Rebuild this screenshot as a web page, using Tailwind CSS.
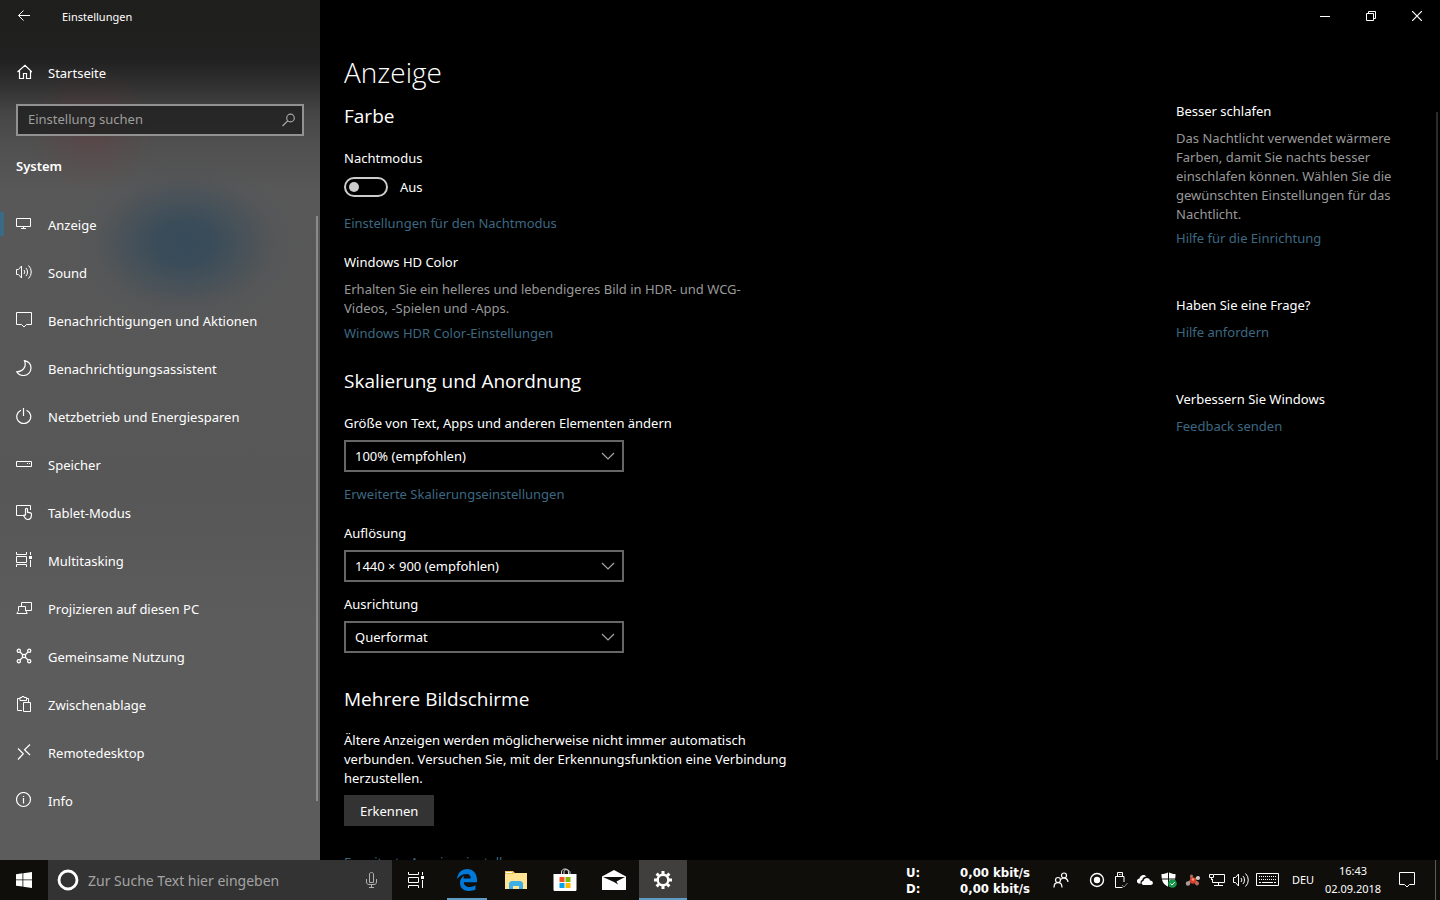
<!DOCTYPE html>
<html lang="de">
<head>
  <meta charset="UTF-8" />
  <meta name="viewport" content="width=device-width, initial-scale=1" />
  <title>Einstellungen</title>
  <script src="https://cdn.jsdelivr.net/npm/@tailwindcss/browser@4"></script>
</head>
<body class="h-screen flex flex-col overflow-hidden bg-black text-white text-[13px] leading-5 font-['Segoe_UI','Noto_Sans',sans-serif]">

  <div class="flex flex-1 min-h-0">

    <!-- Sidebar -->
    <aside class="relative w-80 shrink-0 flex flex-col overflow-hidden bg-[radial-gradient(ellipse_115px_85px_at_185px_243px,#2d475ac8_0%,#2d475ab0_25%,#2d475a60_50%,#2d475a18_75%,transparent_100%),radial-gradient(ellipse_65px_65px_at_92px_130px,#7a2c3040_0%,#7a2c301c_50%,transparent_100%),linear-gradient(#1e1e1c_0px,#212121_60px,#303030_85px,#454545_112px,#505050_145px,#585858_190px,#575757_500px,#5c5c5c_620px,#5c5c5c_100%)]">
      <div class="h-8 flex items-center shrink-0">
        <button class="w-12 h-8 flex items-center justify-center" aria-label="Zurück">
          <svg class="w-4 h-4" viewBox="0 0 16 16" fill="none" stroke="currentColor"><path d="M14 7.500H2.500M7.500 2.500l-5 5 5 5"/></svg>
        </button>
        <h2 class="pl-3.5 pt-px text-[11px]">Einstellungen</h2>
      </div>

      <a href="#" class="mt-4 h-12 px-4 flex items-center gap-4">
        <svg class="w-4 h-4" viewBox="0 0 16 16" fill="none" stroke="currentColor" stroke-width="1.200"><path d="M1.500 8L9 1.200 16 8M3.500 6.500v8h4v-5h3v5h4v-8"/></svg>
        <span class="pt-0.5">Startseite</span>
      </a>

      <div class="relative mt-2 mx-4">
        <input type="text" id="search" aria-label="Einstellung suchen" placeholder="Einstellung suchen" class="block w-full h-8 px-2.5 pr-8 pb-0.5 bg-[#1f1f1f]/80 border-2 border-[#929292] placeholder:text-[#9d9d9d] focus:outline-none" />
        <svg class="absolute right-2 top-2 w-4 h-4 text-[#a6a6a6]" viewBox="0 0 16 16" fill="none" stroke="currentColor" stroke-width="1.200"><circle cx="10.500" cy="6" r="3.800"/><path d="M7.800 8.800L2.500 14"/></svg>
      </div>

      <h3 class="mt-5 px-4 font-semibold">System</h3>

      <nav class="mt-6">
        <a href="#" class="relative h-12 px-4 flex items-center gap-4 before:absolute before:left-0 before:top-3 before:w-1 before:h-6 before:bg-[#3a6a86]">
          <svg class="w-4 h-4" viewBox="0 0 16 16" fill="none" stroke="currentColor"><path d="M.5 2.500h14v8H.5zM5 12.500h5M7.500 11v1"/></svg>
          <span class="pt-0.5">Anzeige</span>
        </a>
        <a href="#" class="h-12 px-4 flex items-center gap-4">
          <svg class="w-4 h-4" viewBox="0 0 16 16" fill="none" stroke="currentColor"><path d="M.5 5.500h2l3-3.500v12l-3-3.500h-2zM8 6a3 3 0 0 1 0 4M10 4a6 6 0 0 1 0 8M12.500 1.500a9 9 0 0 1 0 13"/></svg>
          <span class="pt-0.5">Sound</span>
        </a>
        <a href="#" class="h-12 px-4 flex items-center gap-4">
          <svg class="w-4 h-4" viewBox="0 0 16 16" fill="none" stroke="currentColor"><path d="M.5.5h15v12h-5L8 15l-2.500-2.500h-5z"/></svg>
          <span class="pt-0.5">Benachrichtigungen und Aktionen</span>
        </a>
        <a href="#" class="h-12 px-4 flex items-center gap-4">
          <svg class="w-4 h-4" viewBox="0 0 16 16" fill="none" stroke="currentColor" stroke-width="1.200"><path d="M8.500.7C13 1.700 15 5 15 8c0 4.300-3.300 7.500-7.500 7.500-3 0-5.500-1.500-6.800-3.700C6.500 12 11 7 8.500.7z"/></svg>
          <span class="pt-0.5">Benachrichtigungsassistent</span>
        </a>
        <a href="#" class="h-12 px-4 flex items-center gap-4">
          <svg class="w-4 h-4" viewBox="0 0 16 16" fill="none" stroke="currentColor" stroke-width="1.200"><path d="M5 2.200a7 7 0 1 0 5.500 0M7.500 0v8"/></svg>
          <span class="pt-0.5">Netzbetrieb und Energiesparen</span>
        </a>
        <a href="#" class="h-12 px-4 flex items-center gap-4">
          <svg class="w-4 h-4" viewBox="0 0 16 16" fill="none" stroke="currentColor"><path d="M.5 5.500h15v5H.5zM11 7.500h1M13 7.500h1"/></svg>
          <span class="pt-0.5">Speicher</span>
        </a>
        <a href="#" class="h-12 px-4 flex items-center gap-4">
          <svg class="w-4 h-4" viewBox="0 0 16 16" fill="none" stroke="currentColor"><path d="M7 11.500H.5v-10h14V6"/><path d="M9.500 11V5.200c0-1.300 2-1.300 2 0v3l3 .6c.8.2 1 .7 1 1.500 0 3-.8 5.200-3.500 5.200-2.200 0-3.300-1.500-4.500-4 .8-.8 1.500-.5 2 .3" stroke-width="1.200"/></svg>
          <span class="pt-0.5">Tablet-Modus</span>
        </a>
        <a href="#" class="h-12 px-4 flex items-center gap-4">
          <svg class="w-4 h-4" viewBox="0 0 16 16" fill="none" stroke="currentColor"><path d="M.5 0v2.500h10V0M.5 15v-2.500h10V15M.5 4.500h10v6H.5zM14.500 0v3M14.500 8v7"/><path d="M13 4h3v3h-3z" fill="currentColor" stroke="none"/></svg>
          <span class="pt-0.5">Multitasking</span>
        </a>
        <a href="#" class="h-12 px-4 flex items-center gap-4">
          <svg class="w-4 h-4" viewBox="0 0 16 16" fill="none" stroke="currentColor"><path d="M5.500 6V2.500h10v8H10M2.500 11V6.500h7V11M2 11.500L.8 13.500h10.400L10 11"/></svg>
          <span class="pt-0.5">Projizieren auf diesen PC</span>
        </a>
        <a href="#" class="h-12 px-4 flex items-center gap-4">
          <svg class="w-4 h-4" viewBox="0 0 16 16" fill="none" stroke="currentColor" stroke-width="1.300"><circle cx="2.800" cy="2.800" r="1.600"/><circle cx="13.200" cy="2.800" r="1.600"/><circle cx="2.800" cy="13.200" r="1.600"/><circle cx="13.200" cy="13.200" r="1.600"/><circle cx="8" cy="8" r="1.600"/><path d="M4 4l3 3M12 4L9 7M4 12l3-3M12 12L9 9"/></svg>
          <span class="pt-0.5">Gemeinsame Nutzung</span>
        </a>
        <a href="#" class="h-12 px-4 flex items-center gap-4">
          <svg class="w-4 h-4" viewBox="0 0 16 16" fill="none" stroke="currentColor"><path d="M6 14.500H1.500v-12H4M10 2.500h2.500V6M7.500 6.500h7v9h-7zM4 4.500v-3h2V.5h2v1h2.500v3z"/></svg>
          <span class="pt-0.5">Zwischenablage</span>
        </a>
        <a href="#" class="h-12 px-4 flex items-center gap-4">
          <svg class="w-4 h-4" viewBox="0 0 16 16" fill="none" stroke="currentColor" stroke-width="1.200"><path d="M2 4.500l5.300 5.200L2 15.500M14 .5L8.500 5.700 14 11"/></svg>
          <span class="pt-0.5">Remotedesktop</span>
        </a>
        <a href="#" class="h-12 px-4 flex items-center gap-4">
          <svg class="w-4 h-4" viewBox="0 0 16 16" fill="none" stroke="currentColor" stroke-width="1.200"><circle cx="7.500" cy="7.500" r="7"/><path d="M7.500 6v5.500M7.500 4v1"/></svg>
          <span class="pt-0.5">Info</span>
        </a>
      </nav>

      <div class="absolute right-0.5 top-54 bottom-[59px] w-0.5 bg-[#8b8b8b]"></div>
    </aside>

    <!-- Page -->
    <main class="relative flex-1 min-w-0 flex flex-col">
      <div class="h-8 shrink-0 flex justify-end">
        <button class="w-[46px] flex items-center justify-center" aria-label="Minimieren">
          <svg class="w-2.5 h-2.5" viewBox="0 0 10 10" fill="none" stroke="currentColor"><path d="M0 5.500h10"/></svg>
        </button>
        <button class="w-[46px] flex items-center justify-center" aria-label="Verkleinern">
          <svg class="w-2.5 h-2.5" viewBox="0 0 10 10" fill="none" stroke="currentColor"><path d="M.5 2.500h7v7h-7zM2.500 2V.5h7v7H8"/></svg>
        </button>
        <button class="w-[46px] flex items-center justify-center" aria-label="Schließen">
          <svg class="w-2.5 h-2.5" viewBox="0 0 10 10" fill="none" stroke="currentColor" stroke-width="1.200"><path d="M0 0l10 10M10 0L0 10"/></svg>
        </button>
      </div>

      <h1 class="mt-5 px-6 text-[28px] leading-10 font-light font-['Segoe_UI','Open_Sans',sans-serif]">Anzeige</h1>

      <div class="flex-1 min-h-0 flex justify-between overflow-hidden px-6">
        <div class="w-[460px] pt-2.5">
          <section>
            <h2 class="text-[19px] leading-7 font-['Segoe_UI','Open_Sans',sans-serif]">Farbe</h2>
            <p class="mt-[18px]" id="night-label">Nachtmodus</p>
            <label class="mt-[9px] flex items-center gap-3">
              <input type="checkbox" aria-labelledby="night-label" class="relative appearance-none w-11 h-5 rounded-full border-2 border-[#cccccc] before:absolute before:left-[3px] before:top-[3px] before:w-2.5 before:h-2.5 before:rounded-full before:bg-[#cccccc]" />
              <span>Aus</span>
            </label>
            <a href="#" class="mt-4 block text-[#3d6882]">Einstellungen für den Nachtmodus</a>

            <p class="mt-[19px]">Windows HD Color</p>
            <p class="mt-2 w-[430px] leading-[19px] text-[#999999]">Erhalten Sie ein helleres und lebendigeres Bild in HDR- und WCG-Videos, -Spielen und -Apps.</p>
            <a href="#" class="mt-[5px] block text-[#3d6882]">Windows HDR Color-Einstellungen</a>
          </section>

          <section class="mt-6">
            <h2 class="text-[19px] leading-7 font-['Segoe_UI','Open_Sans',sans-serif]">Skalierung und Anordnung</h2>
            <label for="scale" class="mt-[18px] block">Größe von Text, Apps und anderen Elementen ändern</label>
            <div class="relative mt-[7px] w-70">
              <select name="scale" id="scale" class="block appearance-none w-full h-8 px-[9px] bg-black border-2 border-[#666666]">
                <option>100% (empfohlen)</option>
              </select>
              <svg class="absolute right-2 top-2 w-4 h-4 text-[#a6a6a6] pointer-events-none" viewBox="0 0 16 16" fill="none" stroke="currentColor" stroke-width="1.200"><path d="M2 5l6 6 6-6"/></svg>
            </div>
            <a href="#" class="mt-3 block text-[#3d6882]">Erweiterte Skalierungseinstellungen</a>

            <label for="resolution" class="mt-[19px] block">Auflösung</label>
            <div class="relative mt-[7px] w-70">
              <select name="resolution" id="resolution" class="block appearance-none w-full h-8 px-[9px] bg-black border-2 border-[#666666]">
                <option>1440 × 900 (empfohlen)</option>
              </select>
              <svg class="absolute right-2 top-2 w-4 h-4 text-[#a6a6a6] pointer-events-none" viewBox="0 0 16 16" fill="none" stroke="currentColor" stroke-width="1.200"><path d="M2 5l6 6 6-6"/></svg>
            </div>

            <label for="orientation" class="mt-3 block">Ausrichtung</label>
            <div class="relative mt-[7px] w-70">
              <select name="orientation" id="orientation" class="block appearance-none w-full h-8 px-[9px] bg-black border-2 border-[#666666]">
                <option>Querformat</option>
              </select>
              <svg class="absolute right-2 top-2 w-4 h-4 text-[#a6a6a6] pointer-events-none" viewBox="0 0 16 16" fill="none" stroke="currentColor" stroke-width="1.200"><path d="M2 5l6 6 6-6"/></svg>
            </div>
          </section>

          <section class="mt-8">
            <h2 class="text-[19px] leading-7 font-['Segoe_UI','Open_Sans',sans-serif]">Mehrere Bildschirme</h2>
            <p class="mt-[18px] leading-[19px]">Ältere Anzeigen werden möglicherweise nicht immer automatisch verbunden. Versuchen Sie, mit der Erkennungsfunktion eine Verbindung herzustellen.</p>
            <button class="mt-[7px] h-[31px] px-4 bg-[#333333]">Erkennen</button>
            <a href="#" class="mt-[26px] block text-[#3d6882]">Erweiterte Anzeigeeinstellungen</a>
          </section>
        </div>

        <aside class="w-60 shrink-0 pt-[9px]">
          <h4>Besser schlafen</h4>
          <p class="mt-2 w-56 leading-[19px] text-[#999999]">Das Nachtlicht verwendet wärmere Farben, damit Sie nachts besser einschlafen können. Wählen Sie die gewünschten Einstellungen für das Nachtlicht.</p>
          <a href="#" class="mt-1 block text-[#3d6882]">Hilfe für die Einrichtung</a>

          <h4 class="mt-[47px]">Haben Sie eine Frage?</h4>
          <a href="#" class="mt-[7px] block text-[#3d6882]">Hilfe anfordern</a>

          <h4 class="mt-[47px]">Verbessern Sie Windows</h4>
          <a href="#" class="mt-[7px] block text-[#3d6882]">Feedback senden</a>
        </aside>
      </div>

      <div class="absolute right-0.5 top-28 bottom-25 w-0.5 bg-[#2b2b2b]"></div>
    </main>
  </div>

  <!-- Taskbar -->
  <footer class="h-10 shrink-0 flex bg-[#100e0b]">
    <button class="w-12 flex items-center justify-center" aria-label="Start">
      <svg class="w-4 h-4" viewBox="0 0 16 16" fill="currentColor"><path d="M0 2.200l6.500-.9v6.200H0zM7.300 1.200L16 0v7.500H7.300zM0 8.300h6.500v6.300L0 13.700zM7.300 8.300H16V16l-8.700-1.200z"/></svg>
    </button>
    <div class="relative w-[344px]">
      <svg class="absolute left-2 top-2 w-6 h-6" viewBox="0 0 24 24" fill="none" stroke="currentColor" stroke-width="2.800"><circle cx="12" cy="12" r="9"/></svg>
      <input type="text" aria-label="Suche" placeholder="Zur Suche Text hier eingeben" class="w-full h-10 pl-10 pr-10 bg-[#333333] text-sm placeholder:text-[#a3a3a3] focus:outline-none" />
      <svg class="absolute right-3 top-3 w-4 h-4 text-[#b0b0b0]" viewBox="0 0 16 16" fill="none" stroke="currentColor"><path d="M5.500 2c0-2 4-2 4 0v8.500h-4zM2.500 7v3c0 1.500 1 2.500 2.500 2.500h5c1.500 0 2.500-1 2.500-2.500V7M7.500 12.500V15M5 15.500h5"/></svg>
    </div>
    <div class="flex gap-px">
      <button class="w-12 mr-0.5 flex items-center justify-center" aria-label="Taskansicht">
        <svg class="w-4 h-4" viewBox="0 0 16 16" fill="none" stroke="currentColor"><path d="M.5 0v2.500h10V0M.5 16v-2.500h10V16M.5 5.500h10v5H.5zM14.500 0v3M14.500 8v8"/><path d="M13 4h3v3h-3z" fill="currentColor" stroke="none"/></svg>
      </button>
      <button class="relative w-12 flex items-center justify-center after:absolute after:inset-x-1 after:bottom-0 after:h-0.5 after:bg-[#5f9cc5]" aria-label="Microsoft Edge">
        <svg class="w-5 h-[22px]" viewBox="0 0 20 20" preserveAspectRatio="none" fill="#0078d7"><path d="M0 9C.7 3.500 4.500 0 10.300 0 16 0 20 4 20 9.800V12H6.800c.2 3 2.700 4.300 5.700 4.300 2.200 0 4-.5 6-1.600v4C16.700 19.600 14.500 20 12 20 6.500 20 3 17 3 12.500 3 9.600 4.600 7.300 7.500 6 6.700 6.900 6.500 7.700 6.500 8.700h7.300c0-2.700-1.500-4.200-4.300-4.200C5.800 4.500 2.500 6.200 0 9z"/></svg>
      </button>
      <button class="w-12 flex items-center justify-center" aria-label="Explorer">
        <svg class="w-[22px] h-[18px]" viewBox="0 0 22 18"><path d="M0 0h8l2 2h12v16H0z" fill="#f2c455"/><path d="M0 3h8l2-1h12v16H0z" fill="#ffe494"/><path d="M1 1h6v1H1z" fill="#fff"/><path d="M4 18v-6l2-2h10l2 2v6h-4v-3H8v3z" fill="#3fb0e6"/></svg>
      </button>
      <button class="w-12 flex items-center justify-center" aria-label="Microsoft Store">
        <svg class="w-6 h-6" viewBox="0 0 24 24"><path d="M8.500 7V4c0-4 7-4 7 0v3M11 6V3.500c0-3 6-2 6 1V6" fill="none" stroke="#ddd"/><path d="M.5 6h23v15.500c0 1-.5 1.500-1.500 1.500H2c-1 0-1.500-.5-1.500-1.500z" fill="#fff"/><path d="M6.500 9H11.500v5h-5z" fill="#f25022"/><path d="M12.500 9h5v5h-5z" fill="#7fba00"/><path d="M6.500 15h5v5h-5z" fill="#00a4ef"/><path d="M12.500 15h5v5h-5z" fill="#ffb900"/></svg>
      </button>
      <button class="w-12 flex items-center justify-center" aria-label="Mail">
        <svg class="w-6 h-5" viewBox="0 0 24 20" fill="#fff"><path d="M0 6.500L12 0l12 6.500V20H0z"/><path d="M1 7h22l-8.500 4.500 1.500 3L12 12z" fill="#100e0b"/></svg>
      </button>
      <button class="relative w-12 flex items-center justify-center bg-[#403f3d] after:absolute after:inset-x-0 after:bottom-0 after:h-0.5 after:bg-[#5f9cc5]" aria-label="Einstellungen">
        <svg class="w-[18px] h-[18px]" viewBox="0 0 18 18" fill="none" stroke="#fff"><circle cx="9" cy="9" r="5.300" stroke-width="2.400"/><path d="M9 0v3M9 15v3M0 9h3M15 9h3M2.600 2.600l2.200 2.200M13.200 13.200l2.200 2.200M2.600 15.400l2.200-2.200M13.200 4.800l2.200-2.200" stroke-width="3"/></svg>
      </button>
    </div>

    <div class="ml-auto flex items-center">
      <dl class="mr-[7px] grid grid-cols-[54px_auto] pt-0.5 text-[13px] leading-4 font-bold font-['Tahoma','DejaVu_Sans_Condensed',sans-serif]">
        <dt>U:</dt><dd>0,00 kbit/s</dd>
        <dt>D:</dt><dd>0,00 kbit/s</dd>
      </dl>
      <button class="w-12 h-10 flex items-center justify-center" aria-label="Kontakte">
        <svg class="w-4 h-4" viewBox="0 0 16 16" fill="none" stroke="currentColor" stroke-width="1.200"><circle cx="5" cy="8" r="2.500"/><path d="M1 15.500c0-6.500 8-6.500 8 0"/><circle cx="11" cy="3.500" r="2.500"/><path d="M8 7.500c2-2.500 6.500-2 7 2.500"/></svg>
      </button>
      <button class="w-6 flex justify-center" aria-label="Aufnahme">
        <svg class="w-4 h-4" viewBox="0 0 16 16" fill="none" stroke="currentColor"><circle cx="8" cy="8" r="6.500" stroke-width="1.400"/><circle cx="8" cy="8" r="3.200" fill="currentColor" stroke="none"/></svg>
      </button>
      <button class="w-6 flex justify-center" aria-label="Hardware entfernen">
        <svg class="w-4 h-4" viewBox="0 0 16 16" fill="none" stroke="currentColor"><path d="M4.500 4.500v-4h5v4M6 2.500h.8M7.500 2.500h.8M2.500 4.500h8.500V10M2.500 4.500v11h7"/><path d="M9 13l2 2 3.500-4" stroke="#8a8a8a"/></svg>
      </button>
      <button class="w-6 flex justify-center" aria-label="OneDrive">
        <svg class="w-4 h-4" viewBox="0 0 16 16" fill="#fff"><path d="M1.500 11.500C-1 10-.5 7 2.500 6.500 3 3 7.500 1.500 9.500 4.500 7 4.500 5.500 6 5.200 8 3.500 8.500 3 10.500 4 11.500z"/><path d="M6.500 13C4 12.500 4 9.500 6.500 9 7 5.500 12 5 13 8.500c3.500 0 4 4.500.5 4.500z"/></svg>
      </button>
      <button class="w-6 flex justify-center" aria-label="Windows-Sicherheit">
        <svg class="w-4 h-4" viewBox="0 0 16 16"><path d="M7.500 0C9.500 1.500 12 2 14.500 2c0 6-1 10-7 13C1.500 12 .5 8 .5 2 3 2 5.500 1.500 7.500 0z" fill="#fff"/><path d="M7.500 0v15M.5 7h14" stroke="#100e0b"/><circle cx="11.500" cy="11.500" r="4.300" fill="#16964a"/><path d="M9.500 11.500l1.500 1.500 2.700-2.800" fill="none" stroke="#fff"/></svg>
      </button>
      <button class="w-6 flex justify-center" aria-label="Systemmonitor">
        <svg class="w-4 h-4" viewBox="0 0 16 16"><path d="M1.500 12l4-3M6 4l1 3M13.500 5l-3 2M13 11l-3-2" stroke="#a89a96" stroke-width="2"/><circle cx="8" cy="8.500" r="3.200" fill="#d8402c"/><circle cx="3" cy="11.500" r="2.200" fill="#a89a96"/><circle cx="6.500" cy="4" r="1.600" fill="#b0685f"/><circle cx="12" cy="11.500" r="2" fill="#b8685c"/><circle cx="13" cy="6" r="2" fill="#d8d0cc"/><circle cx="8" cy="7.500" r="1.200" fill="#ff9a80"/></svg>
      </button>
      <button class="w-6 flex justify-center" aria-label="Netzwerk">
        <svg class="w-4 h-4" viewBox="0 0 16 16" fill="none" stroke="currentColor"><path d="M5 2.500h10.500v8H3.500V7M.5 2.500h4v3h-4zM2.500 6v2M9.500 11v3M5 13.500h9"/></svg>
      </button>
      <button class="w-6 flex justify-center" aria-label="Lautstärke">
        <svg class="w-4 h-4" viewBox="0 0 16 16" fill="none" stroke="currentColor"><path d="M.5 5.500h2l3-3.500v12l-3-3.500h-2zM8 6a3 3 0 0 1 0 4M10 4a6 6 0 0 1 0 8M12.500 1.500a9 9 0 0 1 0 13"/></svg>
      </button>
      <button class="w-[30px] flex justify-center" aria-label="Bildschirmtastatur">
        <svg class="w-6 h-3.5" viewBox="0 0 24 14" fill="none" stroke="currentColor"><path d="M.5.5h22v12H.5z"/><path d="M3 3.500h18M3 6.500h18" stroke-dasharray="1 1"/><path d="M3 9.500h2M6 9.500h11M18 9.500h2"/></svg>
      </button>
      <button class="w-10 text-[11px]" aria-label="Eingabesprache">DEU</button>
      <button class="w-[60px] text-[11px] leading-[18px] text-center whitespace-nowrap">16:43<br>02.09.2018</button>
      <button class="w-12 mr-1 flex justify-center" aria-label="Info-Center">
        <svg class="w-4 h-4" viewBox="0 0 16 16" fill="none" stroke="currentColor"><path d="M.5.5h15v12h-5L8 15l-2.500-2.500h-5z"/></svg>
      </button>
      <button class="w-[5px] h-10 border-l border-[#5c5b59]" aria-label="Desktop anzeigen"></button>
    </div>
  </footer>
</body>
</html>
